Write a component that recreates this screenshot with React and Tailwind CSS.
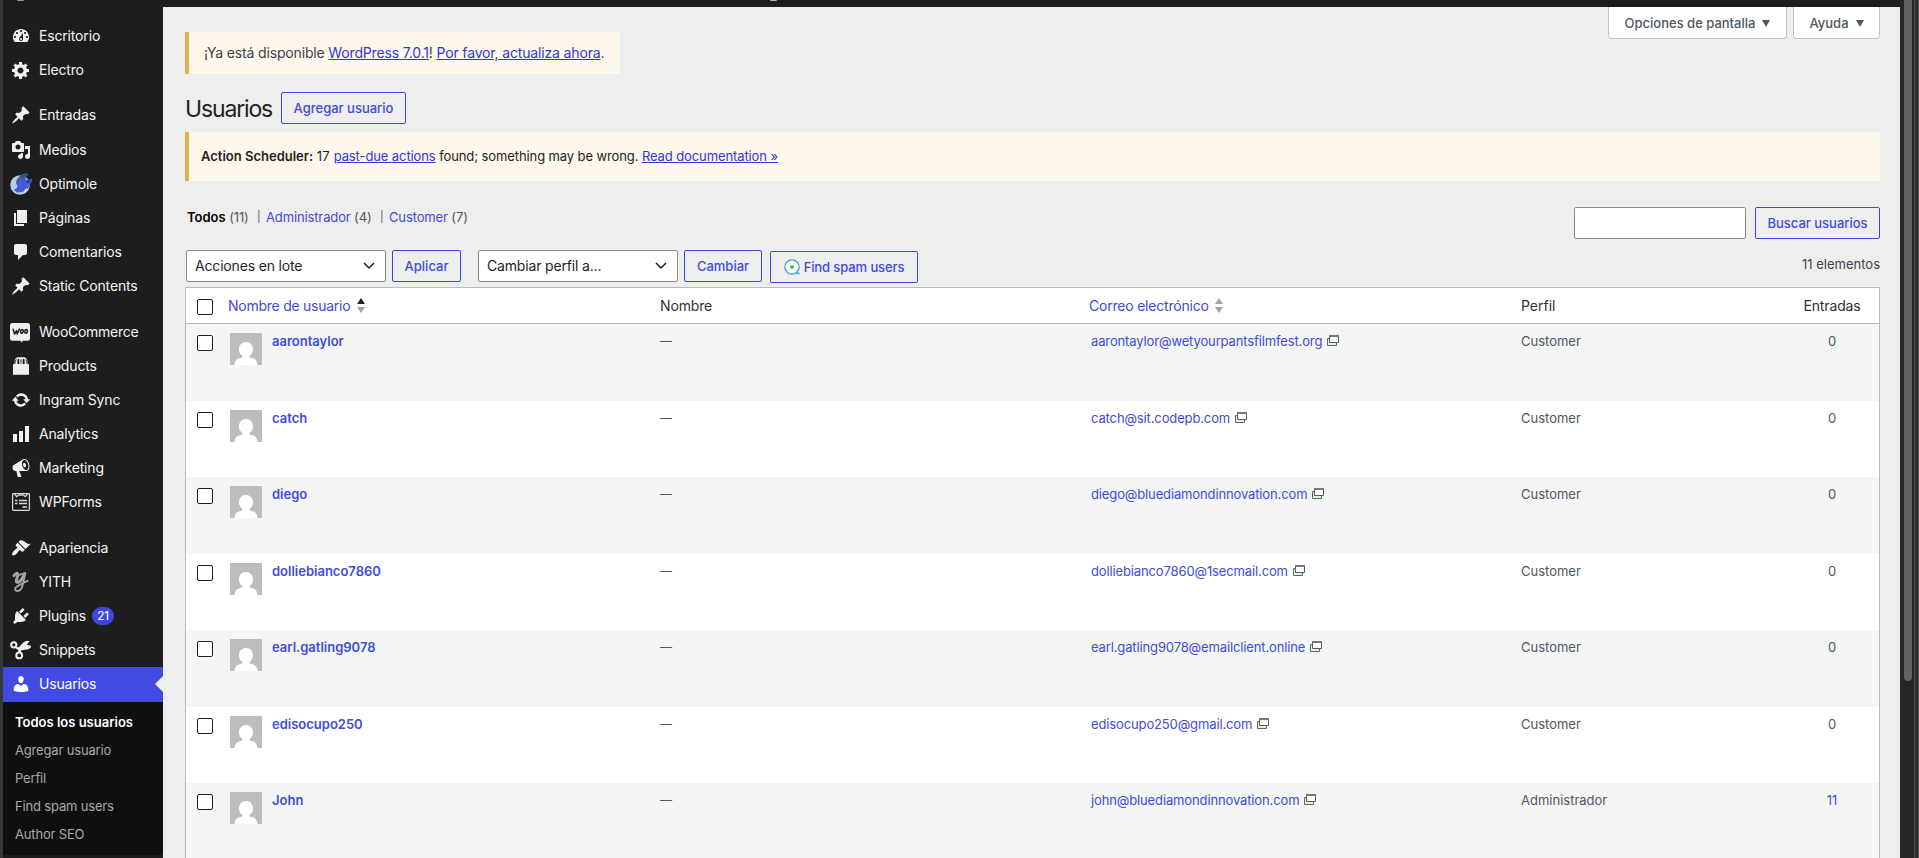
import React from "react";

const P = {
  dashboard:
    "M3.76 16h12.48c1.1-1.37 1.76-3.11 1.76-5 0-4.42-3.58-8-8-8s-8 3.58-8 8c0 1.89.66 3.63 1.76 5zM10 4c.55 0 1 .45 1 1s-.45 1-1 1-1-.45-1-1 .45-1 1-1zM6 6c.55 0 1 .45 1 1s-.45 1-1 1-1-.45-1-1 .45-1 1-1zm8 0c.55 0 1 .45 1 1s-.45 1-1 1-1-.45-1-1 .45-1 1-1zm-5.37 5.55L12 7v6c0 1.1-.9 2-2 2s-2-.9-2-2c0-.57.24-1.08.63-1.45zM4 10c.55 0 1 .45 1 1s-.45 1-1 1-1-.45-1-1 .45-1 1-1zm12 0c.55 0 1 .45 1 1s-.45 1-1 1-1-.45-1-1 .45-1 1-1zm-5 3c0-.55-.45-1-1-1s-1 .45-1 1 .45 1 1 1 1-.45 1-1z",
  gear: "M18 12h-2.18c-.17.7-.44 1.35-.81 1.93l1.54 1.54-2.1 2.1-1.54-1.54c-.58.36-1.23.63-1.91.79V19H8v-2.18c-.68-.16-1.33-.43-1.91-.79l-1.54 1.54-2.12-2.12 1.54-1.54c-.36-.58-.63-1.23-.79-1.91H1V9.03h2.17c.16-.7.44-1.35.8-1.94L2.43 5.55l2.1-2.1 1.54 1.54c.58-.37 1.24-.64 1.93-.81V2h3v2.18c.68.16 1.33.43 1.91.79l1.54-1.54 2.12 2.12-1.54 1.54c.36.59.64 1.24.8 1.94H18V12zm-8.5 1.5c1.66 0 3-1.34 3-3s-1.34-3-3-3-3 1.34-3 3 1.34 3 3 3z",
  pin: "M10.44 3.02l1.82-1.82 6.36 6.35-1.83 1.82c-1.05-.68-2.48-.57-3.41.36l-.75.75c-.92.93-1.04 2.35-.35 3.41l-1.83 1.82-2.41-2.41-2.8 2.79c-.42.42-3.38 2.71-3.8 2.29s1.86-3.39 2.28-3.81l2.79-2.79L4.1 9.36l1.83-1.82c1.05.69 2.48.57 3.4-.36l.75-.75c.93-.92 1.05-2.35.36-3.41z",
  media:
    "M13 11V4c0-.55-.45-1-1-1h-1.67L9 1H5L3.67 3H2c-.55 0-1 .45-1 1v7c0 .55.45 1 1 1h10c.55 0 1-.45 1-1zM7 4.5c1.38 0 2.5 1.12 2.5 2.5S8.38 9.5 7 9.5 4.5 8.38 4.5 7 5.62 4.5 7 4.5zM14 6h5v10.5c0 1.38-1.12 2.5-2.5 2.5S14 17.88 14 16.5s1.12-2.5 2.5-2.5c.17 0 .34.02.5.05V9h-3V6zm-4 8.05V13h2v3.5c0 1.38-1.12 2.5-2.5 2.5S7 17.88 7 16.5 8.12 14 9.5 14c.17 0 .34.02.5.05z",
  page: "M6 15V2h10v13H6zm-1 1h8v2H3V5h2v11z",
  comment:
    "M5 2h9c1.1 0 2 .9 2 2v7c0 1.1-.9 2-2 2h-2l-5 5v-5H5c-1.1 0-2-.9-2-2V4c0-1.1.9-2 2-2z",
  update:
    "M10.2 3.28c3.53 0 6.43 2.61 6.92 6h2.08l-3.5 4-3.5-4h2.32c-.45-1.97-2.21-3.45-4.32-3.45-1.45 0-2.73.71-3.54 1.78L4.95 5.66C6.23 4.2 8.11 3.28 10.2 3.28zm-.4 13.44c-3.52 0-6.43-2.61-6.92-6H.8l3.5-4c1.17 1.33 2.33 2.67 3.5 4H5.48c.45 1.97 2.21 3.45 4.32 3.45 1.45 0 2.73-.71 3.54-1.78l1.71 1.95c-1.28 1.46-3.15 2.38-5.25 2.38z",
  bars: "M18 18V2h-4v16h4zm-6 0V7H8v11h4zm-6 0v-8H2v8h4z",
  megaphone:
    "M18.15 5.94c.46 1.62.38 3.22-.02 4.48-.42 1.28-1.26 2.18-2.3 2.48-.16.06-.26.06-.4.06-.06.02-.12.02-.18.02-.06.02-.14.02-.22.02h-6.8l2.22 5.5c.02.14-.06.26-.14.34-.08.1-.24.16-.34.16H6.95c-.1 0-.26-.06-.34-.16-.08-.08-.16-.2-.14-.34l-1-5.5H4.25l-.02-.02c-.5.06-1.08-.18-1.54-.62s-.88-1.08-1.06-1.88c-.24-.8-.2-1.56-.02-2.2.18-.62.58-1.08 1.06-1.3l.02-.02 9-5.4c.1-.06.18-.1.24-.16.06-.04.14-.08.24-.12.16-.08.28-.12.5-.18 1.04-.3 2.24.1 3.22.98s1.84 2.24 2.26 3.86zm-2.58 5.98h-.02c.4-.1.74-.34 1.04-.7.58-.7.86-1.76.86-3.04 0-.64-.1-1.3-.28-1.98-.34-1.36-1.02-2.5-1.78-3.24s-1.68-1.1-2.46-.88c-.82.22-1.4.96-1.7 2-.32 1.04-.28 2.36.06 3.72.38 1.36 1 2.5 1.8 3.24.78.74 1.62 1.1 2.48.88zm-2.54-7.08c.22-.04.42-.02.62.04.38.16.76.48 1.02 1s.42 1.2.42 1.78c0 .3-.04.56-.12.8-.18.48-.44.84-.86.94-.34.1-.8-.06-1.14-.4s-.64-.86-.78-1.5c-.18-.62-.12-1.24.02-1.72s.48-.84.82-.94z",
  brush:
    "M14.48 11.06L7.41 3.99l1.5-1.5c.5-.56 2.3-.47 3.51.32 1.21.8 1.43 1.28 2.91 2.1 1.18.64 2.45 1.26 4.45.85zm-.71.71L6.7 4.7 4.93 6.47c-.39.39-.39 1.02 0 1.41l1.06 1.06c.39.39.39 1.03 0 1.42-.6.6-1.43 1.11-2.21 1.69-.35.26-.7.53-1.01.84C1.43 14.23.4 16.08 1.4 17.07c.99 1 2.84-.03 4.18-1.36.31-.31.58-.66.85-1.02.57-.78 1.08-1.61 1.69-2.21.39-.39 1.02-.39 1.41 0l1.06 1.06c.39.39 1.02.39 1.41 0z",
  plug: "M13.11 4.36L9.87 7.6 8 5.73l3.24-3.24c.35-.34 1.05-.2 1.56.32.52.51.66 1.21.31 1.55zm-8 1.77l.91-1.12 9.01 9.01-1.19.84c-.71.71-2.63 1.16-3.82 1.16H6.14L4.9 17.26c-.59.59-1.54.59-2.12 0-.59-.58-.59-1.53 0-2.12l1.24-1.24v-3.88c0-1.13.4-3.19 1.09-3.89zm7.26 3.97l3.24-3.24c.34-.35 1.04-.21 1.55.31.52.51.66 1.21.31 1.55l-3.24 3.25z",
  user: "M10 9.25c-2.27 0-2.73-3.44-2.73-3.44C7 4.02 7.82 2 9.97 2c2.16 0 2.98 2.02 2.71 3.81 0 0-.41 3.44-2.68 3.44zm0 2.57L12.72 10c2.39 0 4.52 2.33 4.52 4.53v2.49s-3.65 1.13-7.24 1.13c-3.65 0-7.24-1.13-7.24-1.13v-2.49c0-2.25 1.94-4.48 4.47-4.48z",
};

function Svg({ children, className = "text-[#f0f0f1]" }) {
  return (
    <svg viewBox="0 0 20 20" className={`size-5 shrink-0 overflow-visible fill-current ${className}`}>
      {children}
    </svg>
  );
}

function Optimole() {
  return (
    <Svg>
      <circle cx="9" cy="11" r="9.800" fill="#b4cce0" />
      <path
        d="M6.500 5L10 2.500L15 1.500L14.500 6L17 7L21 5.500L19 10L17.500 11L17 14L14 16.500L10 17.500L6 18L3.500 16L6 14.500L7 12L5.500 9Z"
        fill="#4559dd"
        stroke="#4559dd"
        strokeLinejoin="round"
      />
      <path d="M6.500 6Q8.500 0 14 -.800Q17.800-1.200 17.500 1L14 2.500L12 4.500L8.500 5L7 8L5.500 11z" fill="#2b567c" />
      <path d="M17 5L20.800 5L18 7.500L20 8.500L17.500 9.500L15 8z" fill="#24407f" />
      <path d="M8.200 3.400l1.800.2-.5 3.200-1.600-.8z" fill="#d4394b" />
      <path d="M12.500 17.500Q14 14.500 16.500 14Q16.500 17 14 18.500z" fill="#e6d3aa" />
    </Svg>
  );
}

function Woo() {
  return (
    <Svg>
      <path d="M1.200 1h15.600q2.200 0 2.200 2.200v13.400q0 2.200-2.200 2.200h-5L10.600 20.400 9.200 18.800h-8q-2.200 0-2.200-2.200V3.200q0-2.200 2.200-2.200z" fill="#f0f0f1" />
      <path
        d="M2.200 7.200L3.600 12L5.600 8.600L6.200 12L8.400 7M11.200 7.400a1.300 2 15 1 0 .01 0zM15.400 7.400a1.300 2 15 1 0 .01 0z"
        fill="none"
        stroke="#1d1d1d"
        strokeWidth="1.500"
        strokeLinejoin="round"
        strokeLinecap="round"
      />
    </Svg>
  );
}

function Products() {
  return (
    <Svg>
      <path d="M2 8.300h16V18.800H2zM3.300 8.300Q3.300 1.500 6.800 1.200h6.400Q16.700 1.500 16.700 8.300z" />
      <path d="M6.400 8V5Q6.400 2.800 7.400 2.800T8.300 5V8zM11.700 8V5q0-2.200.9-2.200t1 2.200V8z" fill="#1d1d1d" />
      <path d="M3.900 7.800Q4.200 4.600 5.400 3.300M16.100 7.800Q15.800 4.600 14.600 3.300M10 3.200v4.500" stroke="#1d1d1d" strokeWidth=".9" fill="none" />
    </Svg>
  );
}

function WPForms() {
  return (
    <Svg>
      <g fill="none" stroke="#d8d8da" strokeWidth="1.200">
        <rect x="1.600" y="1.600" width="16.800" height="16.800" rx=".8" />
        <path d="M3.500 2l2.200 2.600L8.500 2.600 10 3.600l1.500-1L14.300 4.600 16.500 2" />
        <path d="M4 8.500h2.500M8 8.500h8M4 11.500h2.500M8 11.500h8M11.500 15h4.500" strokeWidth="1.400" />
      </g>
    </Svg>
  );
}

function Yith() {
  return (
    <svg viewBox="0 0 20 20" className="size-5 shrink-0 overflow-visible">
      <g fill="none" stroke="#a2a2a4" strokeLinecap="round" strokeLinejoin="round">
        <path d="M3 3.600Q6-.200 6.800 2.200Q6.800 4.500 5.400 8Q4.800 10.600 7.500 10.200Q11 9 13.400 1.600" strokeWidth="3.100" />
        <path d="M9 3Q10.500 1 12 2.500" strokeWidth="1.800" />
        <path d="M14.400 1.200Q13 7 11.800 12.500Q10.300 19.300 6 19Q3.200 18.300 4.500 15.800Q6.500 13.500 16.500 8.800" strokeWidth="1.900" />
      </g>
    </svg>
  );
}

function Snippets() {
  return (
    <Svg>
      <g fill="none" stroke="#f0f0f1" strokeWidth="2">
        <circle cx="2.800" cy="4.800" r="2.600" />
        <circle cx="8.200" cy="15.400" r="2.900" />
      </g>
      <path d="M4.500 6.500L7.500 7.600L12.600 2.200Q15.500-.200 18.500 1.200L15.800 5Q19.800 4.800 20.200 6.500Q19.500 9.600 14 9.800L10.300 10.300L9.800 13L7.200 12.700L7.300 10.200L3.800 7.800z" />
    </Svg>
  );
}

function Dash({ d, className }) {
  return (
    <Svg className={className}>
      <path d={d} fillRule="evenodd" />
    </Svg>
  );
}

const MENU = [
  {
    gap: "mb-[11px]",
    items: [
      ["Escritorio", <Dash d={P.dashboard} />],
      ["Electro", <Dash d={P.gear} />],
    ],
  },
  {
    gap: "mb-3 [&>li:first-child]:mb-px",
    items: [
      ["Entradas", <Dash d={P.pin} />],
      ["Medios", <Dash d={P.media} />],
      ["Optimole", <Optimole />],
      ["Páginas", <Dash d={P.page} />],
      ["Comentarios", <Dash d={P.comment} />],
      ["Static Contents", <Dash d={P.pin} />],
    ],
  },
  {
    gap: "mb-3",
    items: [
      ["WooCommerce", <Woo />],
      ["Products", <Products />],
      ["Ingram Sync", <Dash d={P.update} />],
      ["Analytics", <Dash d={P.bars} />],
      ["Marketing", <Dash d={P.megaphone} />],
      ["WPForms", <WPForms />],
    ],
  },
  {
    gap: "",
    items: [
      ["Apariencia", <Dash d={P.brush} />],
      ["YITH", <Yith />],
      ["Plugins", <Dash d={P.plug} />, "21"],
      ["Snippets", <Snippets />],
    ],
  },
];

function Sidebar() {
  return (
    <nav className="flex w-[160px] shrink-0 flex-col bg-[#1d1d1d] pt-3 text-sm tracking-[-0.012em] text-[#f4f4f5]">
      {MENU.map(({ gap, items }, i) => (
        <ul key={i} className={gap}>
          {items.map(([label, icon, badge]) => (
            <li key={label} className="flex h-[34px] items-center gap-2 pl-2">
              {icon}
              <span className={label === "WooCommerce" ? "tracking-[-0.02em]" : ""}>{label}</span>
              {badge && (
                <span className="-ml-0.5 flex h-[18px] w-[22px] items-center justify-center rounded-full bg-[#3d47e0] text-[11.5px] font-medium">
                  {badge}
                </span>
              )}
            </li>
          ))}
        </ul>
      ))}
      <div className="flex h-[35px] shrink-0 items-center bg-[#414be0] pb-px pl-2 text-white">
        <Dash d={P.user} className="text-white" />
        <span className="ml-2 flex-1">Usuarios</span>
        <svg viewBox="0 0 8 16" className="h-4 w-2 fill-[#eeeeee]">
          <path d="M8 0v16L0 8z" />
        </svg>
      </div>
      <ul className="flex h-[153px] shrink-0 flex-col bg-[#0f0f10] pt-1.5 pl-3 text-[13px] text-[#a9a9ab]">
        <li className="flex h-7 items-center font-semibold tracking-normal text-white">Todos los usuarios</li>
        <li className="flex h-7 items-center">Agregar usuario</li>
        <li className="flex h-7 items-center">Perfil</li>
        <li className="flex h-7 items-center">Find spam users</li>
        <li className="flex h-7 items-center">Author SEO</li>
      </ul>
    </nav>
  );
}

function Button({ children, className = "" }) {
  return (
    <button
      className={`flex h-8 shrink-0 items-center justify-center rounded-[2px] border border-[#3d47e0] pt-px text-[13px] font-medium text-[#414be0] ${className}`}
    >
      {children}
    </button>
  );
}

function Select({ children }) {
  return (
    <div className="flex h-8 w-[200px] shrink-0 items-center justify-between rounded-[2px] border border-[#8c8c8c] bg-white pr-[10px] pl-2 text-sm tracking-[-0.012em] text-[#1e1e1e]">
      <span>{children}</span>
      <svg viewBox="0 0 12 8" className="h-2 w-3 fill-none stroke-[#1e1e1e]" strokeWidth="1.500">
        <path d="M1 1l5 5 5-5" />
      </svg>
    </div>
  );
}

function Sort({ asc }) {
  return (
    <svg viewBox="0 0 8 16" className="mb-0.5 h-4 w-2">
      <path d="M0 7L4 1l4 6z" fill={asc ? "#1d2327" : "#a0a3a6"} />
      <path d="M0 10h8l-4 6z" fill="#a0a3a6" />
    </svg>
  );
}

function Check() {
  return <span className="ml-[11px] block size-4 rounded-[2px] border border-[#1e1e1e] bg-white" />;
}

function Avatar() {
  return (
    <svg viewBox="0 0 32 32" className="mt-px size-8 shrink-0">
      <path d="M0 0h32v32H0z" fill="#bdbdbd" />
      <path
        d="M16 9c4.200 0 7 3.200 7 7.300 0 3.200-1.500 5.600-3.600 6.900.2 1.300 1.200 1.700 3 2 3 .6 4.600 2.500 5.200 6.800H4.400c.6-4.300 2.200-6.200 5.200-6.800 1.800-.3 2.800-.7 3-2C10.500 21.900 9 19.500 9 16.300 9 12.200 11.800 9 16 9z"
        fill="#fff"
      />
    </svg>
  );
}

function Windows() {
  return (
    <svg viewBox="0 0 12 11" className="mt-[3px] ml-[5px] h-[11px] w-3">
      <path d="M.5 3.500h9v7h-9z" fill="#dff3df" stroke="#5d6b5d" />
      <path d="M2.500 1h9v6.500h-9z" fill="#fff" stroke="#5a5a5a" />
      <path d="M2 1h10" stroke="#777" strokeWidth="2" />
    </svg>
  );
}

const USERS = [
  ["aarontaylor", "aarontaylor@wetyourpantsfilmfest.org", "Customer", "0"],
  ["catch", "catch@sit.codepb.com", "Customer", "0"],
  ["diego", "diego@bluediamondinnovation.com", "Customer", "0"],
  ["dolliebianco7860", "dolliebianco7860@1secmail.com", "Customer", "0"],
  ["earl.gatling9078", "earl.gatling9078@emailclient.online", "Customer", "0"],
  ["edisocupo250", "edisocupo250@gmail.com", "Customer", "0"],
  ["John", "john@bluediamondinnovation.com", "Administrador", "11"],
];

function Table() {
  return (
    <div className="mt-1 border border-b-0 border-[#b9bcbc] bg-white">
      <div className="grid h-9 grid-cols-[42px_432px_429px_432px_1fr_94px] items-center border-b border-[#b9bcbc] text-sm text-[#2c3338]">
        <span className="pt-0.5">
          <Check />
        </span>
        <span className="flex items-center gap-[7px] tracking-[-0.018em] text-[#414be0]">
          Nombre de usuario <Sort asc />
        </span>
        <span className="tracking-[-0.01em]">Nombre</span>
        <span className="flex items-center gap-1.5 tracking-[-0.015em] text-[#414be0]">
          Correo electrónico <Sort />
        </span>
        <span>Perfil</span>
        <span className="text-center tracking-[-0.01em]">Entradas</span>
      </div>
      {USERS.map(([name, email, role, posts]) => (
        <div
          key={name}
          className="grid h-[76.500px] grid-cols-[42px_432px_429px_432px_1fr_94px] items-start bg-white text-[13px] leading-[18px] text-[#50575e] even:bg-[#f4f6f6]"
        >
          <span className="pt-[11px]">
            <Check />
          </span>
          <span className="flex gap-[10px] pt-2 pl-0.5 font-semibold text-[#414be0]">
            <Avatar />
            <span>{name}</span>
          </span>
          <span className="pt-2 text-[12px] font-medium">—</span>
          <span className="flex pt-2 pl-0.5 tracking-[-0.01em] text-[#414be0]">
            {email}
            <Windows />
          </span>
          <span className="pt-2">{role}</span>
          <span className={`pt-2 text-center ${posts === "0" ? "" : "text-[#414be0]"}`}>{posts}</span>
        </div>
      ))}
    </div>
  );
}

function Triangle() {
  return (
    <svg viewBox="0 0 8 7" className="h-[7px] w-2 fill-[#50575e]">
      <path d="M0 0h8L4 7z" />
    </svg>
  );
}

export default function App() {
  return (
    <div className="flex h-[858px] w-[1919px] overflow-hidden bg-[#1d1d1d] font-['Inter','Liberation_Sans',sans-serif]">
      <div className="w-[3px] shrink-0 bg-[#37373a]" />
      <div className="flex w-[1897px] shrink-0 flex-col">
        <header className="flex h-[7px] shrink-0 items-start bg-[#1d1d1d]">
          <span className="ml-[14px] h-px w-[7px] rounded-b bg-[#9a9a9a]" />
          <span className="ml-[746px] h-px w-[7px] rounded-b bg-[#b5b5b5]" />
        </header>
        <div className="flex min-h-0 flex-1">
          <Sidebar />
          <main className="flex min-w-0 flex-1 flex-col bg-[#eeeeee] pr-5 pl-[22px]">
            <div className="flex h-[67px] items-start justify-between">
              <p className="mt-[25px] flex h-[42px] w-[435px] items-center border-l-4 border-[#e8b04c] bg-[#fef7ec] pl-[15px] text-sm tracking-[-0.011em] text-[#3c434a]">
                <span>
                  ¡Ya está disponible <a className="text-[#2f38d8] underline">WordPress 7.0.1</a>!{" "}
                  <a className="text-[#2f38d8] underline">Por favor, actualiza ahora</a>.
                </span>
              </p>
              <div className="flex gap-1.5 text-[13px] font-medium text-[#50575e]">
                <div className="flex h-8 w-[179px] items-center justify-center gap-[7px] rounded-b border border-t-0 border-[#bfc1c3] bg-white pt-0.5">
                  Opciones de pantalla <Triangle />
                </div>
                <div className="flex h-8 w-[87px] items-center justify-center gap-[7px] rounded-b border border-t-0 border-[#bfc1c3] bg-white pt-0.5">
                  Ayuda <Triangle />
                </div>
              </div>
            </div>
            <div className="mt-[18px] flex h-8 items-center">
              <h1 className="w-[96px] pt-px text-[23px] leading-8 tracking-[-0.05em] text-[#1d2327]">Usuarios</h1>
              <Button className="w-[125px]">Agregar usuario</Button>
            </div>
            <p className="mt-2 flex h-[49px] shrink-0 items-center border-l-4 border-[#e8b04c] bg-[#fef7ec] pt-px pl-3 text-[13px] tracking-[-0.008em] text-[#1e1e1e]">
              <span>
                <b className="font-semibold tracking-normal">Action Scheduler:</b> <span className="tracking-[0.03em]">17</span>{" "}
                <a className="text-[#2f38d8] underline">past-due actions</a> found; something may be wrong.{" "}
                <a className="text-[#2f38d8] underline">Read documentation »</a>
              </span>
            </p>
            <div className="mt-[26px] flex h-8 justify-between">
              <ul className="flex pl-0.5 text-[13px] leading-[21px] tracking-[-0.01em] text-[#50575e]">
                <li className="w-[70px]">
                  <b className="font-semibold tracking-normal text-black">Todos</b> (11)
                </li>
                <li className="w-[9px] text-[11px]">|</li>
                <li className="w-[114px]">
                  <a className="text-[#414be0]">Administrador</a> (4)
                </li>
                <li className="w-[9px] text-[11px]">|</li>
                <li>
                  <a className="text-[#414be0]">Customer</a> (7)
                </li>
              </ul>
              <div className="flex gap-[9px]">
                <div className="h-8 w-[172px] rounded-[2px] border border-[#8c8c8c] bg-white" />
                <Button className="w-[125px]">Buscar usuarios</Button>
              </div>
            </div>
            <div className="mt-[11px] flex h-[33px] items-start pl-px">
              <Select>Acciones en lote</Select>
              <Button className="ml-1.5 w-[69px]">Aplicar</Button>
              <span className="w-[17px]" />
              <Select>Cambiar perfil a...</Select>
              <Button className="ml-1.5 w-[78px]">Cambiar</Button>
              <Button className="mt-px ml-2 w-[148px] gap-1 tracking-[-0.008em]">
                <svg viewBox="0 0 16 16" className="mb-0.5 size-4">
                  <circle cx="8" cy="8" r="7.100" fill="#fff" stroke="#4aa3c7" strokeWidth="1.300" />
                  <path d="M12 13.500h3.500V15H11z" fill="#2fa9e0" />
                  <circle cx="8" cy="8" r="1.700" fill="#12b52a" />
                </svg>
                Find spam users
              </Button>
              <span className="ml-auto text-[13px] leading-[29px] text-[#3c434a]">11 elementos</span>
            </div>
            <Table />
          </main>
        </div>
      </div>
      <div className="flex w-[14px] shrink-0 items-start bg-[#262626] pl-1">
        <div className="h-[681px] w-2 rounded-b-full bg-[#636363]" />
      </div>
      <div className="w-px bg-[#505050]" />
      <div className="w-[3px] bg-[#2c2c2c]" />
      <div className="w-px bg-[#505050]" />
    </div>
  );
}
